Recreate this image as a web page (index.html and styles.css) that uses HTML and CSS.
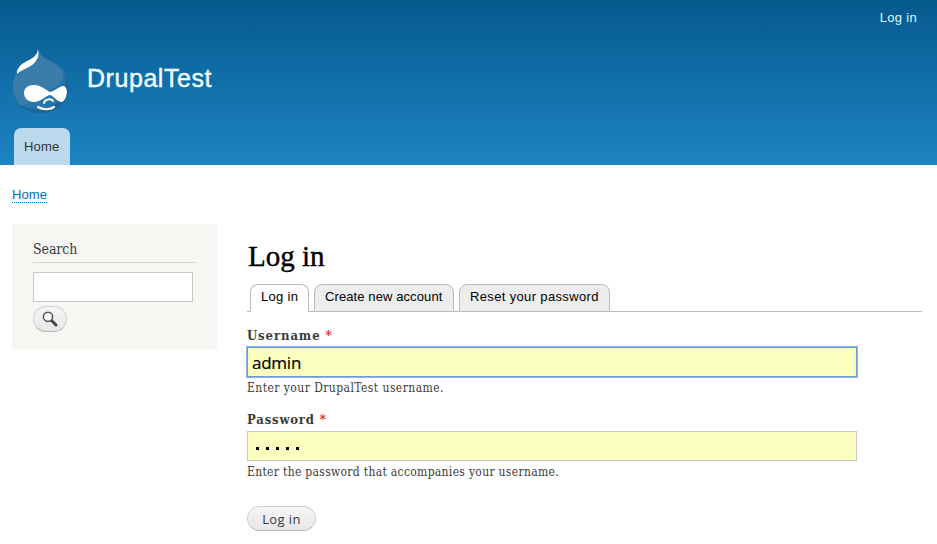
FILE: index.html
```html
<!DOCTYPE html>
<html lang="en">
<head>
<meta charset="utf-8">
<title>Log in | DrupalTest</title>
<link rel="stylesheet" href="styles.css">
</head>
<body>
<header class="header">
  <nav class="account"><a href="#">Log in</a></nav>
  <div class="branding">
    <svg class="logo" viewBox="0 0 58 66" width="58" height="66" aria-hidden="true">
      <path fill="#2875ab" d="M27 1C27 7 23 10 17 14C8 19 1 26 1 37C1 53 14 64 29 64C46 64 57 52 57 36C57 25 50 18 41 13C34 9 28 7 27 1Z"/>
      <path fill="#3a7dab" d="M27 2C27 8 22 11 17 14C8 19 1 26 1 37C1 45 4 51 8 55C13 60 19 51 25 46C34 39 51 39 51 28C51 20 45 16 39 13C33 10 28 8 27 2Z"/>
      <path fill="#1d6299" d="M51 22C55 31 55 44 47 52C36 63 18 63 8 55C14 62 21 64 29 64C46 64 57 52 57 36C57 31 54 26 51 22Z"/>
      <path fill="#fff" d="M26 0C28 8 24 14 17 18C11 21 8 22 5 25C4 20 9 15 15 12C21 9 25 7 26 0Z"/>
      <path fill="#fff" d="M22 36C29 36 34 41 38 43C43 42 47 37 52 37C57 39 55 51 50 53C45 53 42 47 38 46C33 47 29 53 22 53C16 53 12 49 12 44C12 39 16 36 22 36Z"/>
      <path fill="none" stroke="#fff" stroke-width="2" stroke-linecap="round" d="M32 54C33 50 39 49 41 52"/>
      <path fill="none" stroke="#fff" stroke-width="2.2" stroke-linecap="round" d="M26 58C31 61 38 61 42 58"/>
    </svg>
    <a class="site-name" href="#">DrupalTest</a>
  </div>
  <nav class="main-menu"><a href="#">Home</a></nav>
</header>
<div class="breadcrumb"><a href="#">Home</a></div>
<div class="page">
  <aside class="sidebar">
    <h2>Search</h2>
    <input class="search-field" type="text" aria-label="Search">
    <button class="search-button" aria-label="Search">
      <svg viewBox="0 0 16 16" width="16" height="16"><path d="M9.500 9.500L14 14" stroke="#444" stroke-width="3" stroke-linecap="round"/><circle cx="6" cy="5.800" r="4.600" fill="#f8f8f8" stroke="#555" stroke-width="1.500"/></svg>
    </button>
  </aside>
  <main class="content">
    <h1>Log in</h1>
    <nav class="tabs">
      <a class="tab active" href="#">Log in</a>
      <a class="tab create" href="#">Create new account</a>
      <a class="tab reset" href="#">Reset your password</a>
    </nav>
    <form>
      <div class="form-item">
        <label class="label-user" for="user">Username <span class="required">*</span></label>
        <input class="field focused" id="user" type="text" value="admin">
        <p class="description desc-user">Enter your DrupalTest username.</p>
      </div>
      <div class="form-item">
        <label class="label-pass">Password <span class="required">*</span></label>
        <div class="field password"><i></i><i></i><i></i><i></i><i></i></div>
        <p class="description desc-pass">Enter the password that accompanies your username.</p>
      </div>
      <button class="submit" type="button">Log in</button>
    </form>
  </main>
</div>
</body>
</html>
```
FILE: styles.css
```css
* { box-sizing: border-box; }
body {
  margin: 0;
  height: 544px;
  overflow: hidden;
  background: #fff;
  color: #3b3b3b;
  font: 13px/18px "Liberation Sans", Arial, sans-serif;
}
a { color: inherit; text-decoration: none; }
h1, h2, p { margin: 0; font-weight: normal; }
.header {
  height: 165px;
  background: linear-gradient(#055a8e 0, #1d84c3 100%);
}
.account {
  height: 48px;
  padding: 9px 20px 0 0;
  text-align: right;
  color: #dffaff;
  letter-spacing: .3px;
}
.branding { display: flex; height: 80px; padding-left: 12px; }
.logo { display: block; margin-top: 1px; }
.site-name {
  margin: 14px 0 0 17px;
  color: #f2ffff;
  font-size: 25px;
  line-height: 32px;
  letter-spacing: .55px;
  -webkit-text-stroke: .4px #f2ffff;
}
.main-menu { padding-left: 14px; }
.main-menu a {
  display: block;
  width: 56px;
  height: 37px;
  padding: 10px 0 0 10px;
  border-radius: 7px 7px 0 0;
  background: #bbdaed;
  color: #333;
  letter-spacing: .15px;
}
.breadcrumb { height: 60px; padding: 21px 0 0 12px; }
.breadcrumb a {
  display: inline-block;
  height: 17px;
  border-bottom: 1px dotted #0071b3;
  color: #0071b3;
  letter-spacing: .1px;
}
.page { display: flex; gap: 30px; padding-left: 12px; }
.sidebar {
  width: 205px;
  height: 126px;
  margin-top: -1px;
  padding: 15px 21px 0;
  background: #f6f6f2;
}
.sidebar h2 {
  height: 24px;
  border-bottom: 1px solid #d6d6d6;
  font: 14px/20px "DejaVu Serif Condensed", "DejaVu Serif", serif;
  letter-spacing: -.1px;
}
.search-field {
  display: block;
  width: 160px;
  height: 30px;
  margin-top: 9px;
  border: 1px solid #c8c8c8;
  background: #fff;
}
.search-button, .submit {
  display: flex;
  align-items: center;
  justify-content: center;
  border: 1px solid #d0d0d0;
  border-bottom-color: #b4b4b4;
  border-radius: 14px;
  background: linear-gradient(#f5f5f5, #e7e7e7);
  padding: 0;
}
.search-button { width: 34px; height: 26px; margin-top: 4px; }
.content { width: 675px; padding-top: 14px; }
h1 {
  height: 45px;
  padding-left: 1px;
  color: #000;
  font: 29px/34px "Liberation Serif", serif;
  -webkit-text-stroke: .4px #000;
}
.tabs {
  display: flex;
  gap: 5px;
  height: 28px;
  padding-left: 3px;
  border-bottom: 1px solid #bbb;
}
.tab {
  height: 28px;
  padding: 3px 0 0 10px;
  border: 1px solid #bbb;
  border-radius: 8px 8px 0 0;
  background: #ededed;
  color: #000;
}
.tab.active { width: 59px; background: #fff; border-bottom-color: #fff; letter-spacing: .3px; }
.create { width: 140px; letter-spacing: .1px; }
.reset { width: 151px; letter-spacing: .35px; }
.form-item { height: 84px; padding-top: 14px; }
.form-item label {
  display: block;
  height: 21px;
  font: bold 13px/19px "DejaVu Serif Condensed", "DejaVu Serif", serif;
  letter-spacing: .8px;
}
.form-item .label-user { letter-spacing: .9px; }
.required { color: #e5262d; }
.field {
  display: block;
  width: 610px;
  height: 30px;
  padding: 0 5px;
  border: 1px solid #c8c8c8;
  background: #faffbd;
  color: #000;
  font: 17px/28px "Open Sans", sans-serif;
}
.focused {
  padding-left: 4px;
  border-color: #6f9bd0;
  outline: 1px solid #8db4e4;
  outline-offset: 0;
  letter-spacing: -.25px;
  -webkit-text-stroke: .2px #000;
}
.password { display: flex; align-items: center; gap: 7px; padding: 5px 0 0 8px; }
.password i { width: 3px; height: 3px; background: #000; }
.description {
  height: 20px;
  padding-top: 1px;
  font: 12px/20px "DejaVu Serif Condensed", "DejaVu Serif", serif;
  white-space: nowrap;
}
.desc-user { letter-spacing: .44px; }
.desc-pass { letter-spacing: .31px; }
.submit {
  width: 69px;
  height: 25px;
  margin-top: 26px;
  color: #3a3a3a;
  font: 13px/18px "Open Sans", sans-serif;
  letter-spacing: .4px;
}
```
